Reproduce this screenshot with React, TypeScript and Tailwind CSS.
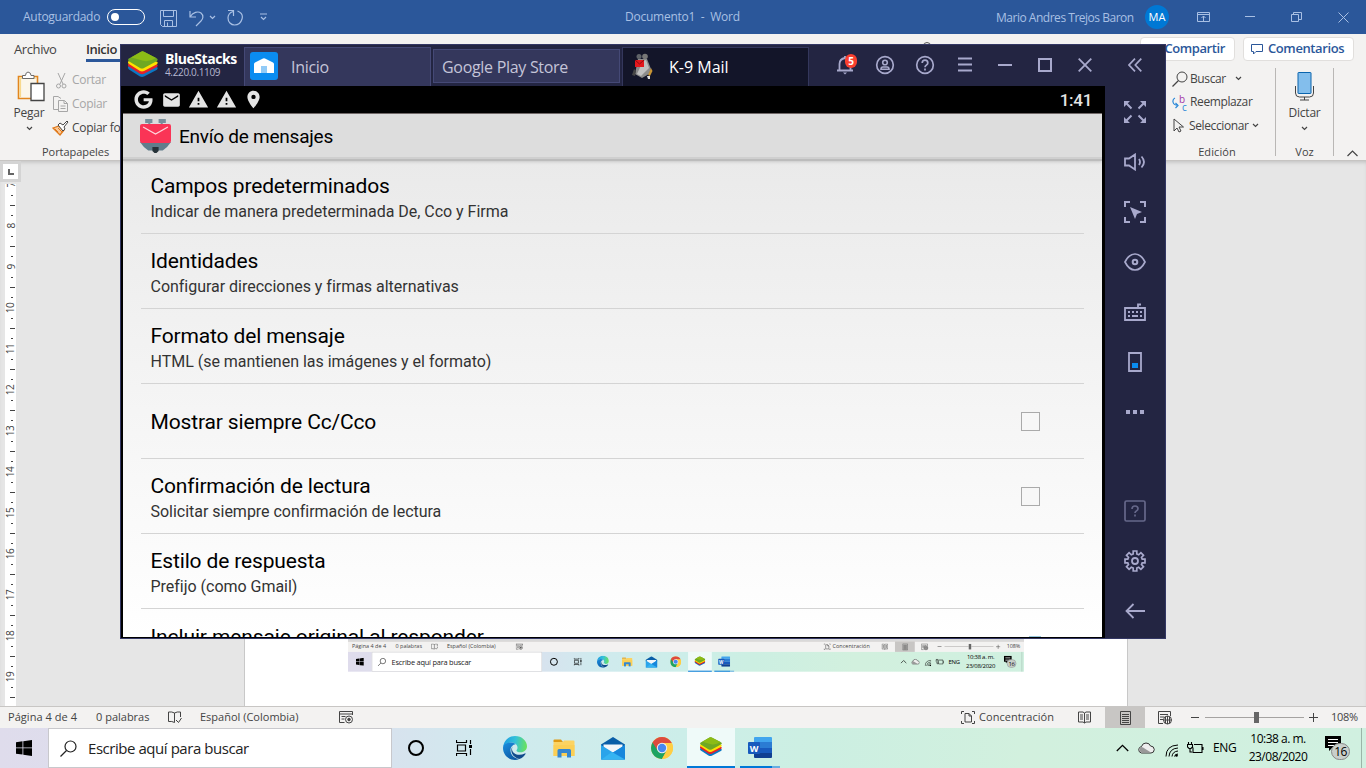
import React from "react";
import { FaGoogle } from "react-icons/fa";
import { MdEmail, MdWarning, MdLocationOn } from "react-icons/md";

type IconProps = { className?: string };

const ui = "font-['Open_Sans','Noto_Sans',sans-serif]";

function Svg({ w, h, className = "", children }: { w: number; h: number; className?: string; children: React.ReactNode }) {
  return (
    <svg width={w} height={h} viewBox={`0 0 ${w} ${h}`} fill="none" stroke="currentColor" className={`block shrink-0 ${className}`}>
      {children}
    </svg>
  );
}

function Caret({ className = "" }: IconProps) {
  return (
    <Svg w={7} h={5} className={className}>
      <path d="M1 1l2.500 2.500L6 1" strokeWidth="1.200" />
    </Svg>
  );
}

/* ---------- Logos ---------- */

function BlueStacksLogo({ size }: { size: number }) {
  return (
    <svg width={size} height={size * 0.87} viewBox="0 0 30 26" className="block shrink-0">
      <path d="M0 15.500L16 10l13.500 6.500c.4 1-.1 2-1 2.500L16 25.500q-2 .8-4 0L1 18.500Q-.3 17.300 0 15.500z" fill="#0b78c4" />
      <path d="M0 13L16 7l13.500 6.800c.4 1-.1 2-1 2.500L16 22.800q-2 .8-4 0L1 15.800Q-.3 15 0 13z" fill="#e3222b" />
      <path d="M0 10.500L16 5l13.500 6c.4 1-.1 2-1 2.500L16 20q-2 .8-4 0L1 13Q-.3 12.300 0 10.500z" fill="#ffe100" />
      <path d="M.5 7.700L13 .6q1.500-.8 3 0l13 6.800q1.400 1.300 0 2.500L16 16.900q-2 1-4 0L.8 10.200Q-.3 9 .5 7.700z" fill="#6fa822" />
      <path d="M3 6.500L13 .6q1.500-.8 3 0l12 6.300q-7 4.500-13 2.800T3 6.500z" fill="#8cbb16" />
    </svg>
  );
}

function EdgeLogo() {
  return (
    <svg width="24" height="24" viewBox="0 0 24 24" className="block">
      <defs>
        <linearGradient id="edgeTop" x1="0" y1=".4" x2="1" y2=".5">
          <stop offset="0" stopColor="#1b9de2" />
          <stop offset=".5" stopColor="#35c1d8" />
          <stop offset="1" stopColor="#6be35a" />
        </linearGradient>
        <linearGradient id="edgeLow" x1="0" y1="0" x2=".6" y2="1">
          <stop offset="0" stopColor="#1b8fe0" />
          <stop offset="1" stopColor="#0c59a4" />
        </linearGradient>
      </defs>
      <path d="M.2 11C.8 4.700 5.800 0 12 0c7 0 12 5 12 10.300 0 3.600-2.800 6-6.300 6-2.900 0-4.200-1-4.200-1.900 0-.7 1-1 1-2.900 0-2.300-2.500-4.900-6.500-4.900C4.500 6.600 1.500 8.500.2 11z" fill="url(#edgeTop)" />
      <path d="M0 12c0-3.500 4-5.400 7.700-5.400 2 0 3.900.6 5 1.700-3 .3-5.200 2.700-5.200 6 0 4.700 3.800 8.200 8.700 8.700C14.900 23.700 13.500 24 12 24 5.400 24 0 18.600 0 12z" fill="url(#edgeLow)" />
      <path d="M9.600 10.300c-3.400 5.500.4 11.200 6.600 12.700 3-1 5.100-3.100 6.300-5.100.3-.6-.2-.8-.7-.5-5.800 3-12.500.6-12.800-4.200 0-1.100.2-2 .6-2.900z" fill="#114a8b" />
    </svg>
  );
}

function FolderLogo() {
  return (
    <svg width="22" height="19" viewBox="0 0 22 19" className="block">
      <path d="M.5 1.500Q.5.500 1.500.500H8l2 2.500H.5z" fill="#e09a12" />
      <path d="M.5 3H10l1-1.500h9.500q1 0 1 1V17h-21z" fill="#fcd362" />
      <path d="M.5 6h21v11H.5z" fill="#fbcf55" />
      <path d="M4.500 18.500V11.500Q4.500 10 6 10h10.500q1.500 0 1.500 1.500v7h-4v-4.500H8.500v4.500z" fill="#3587d0" />
    </svg>
  );
}

function MailLogo() {
  return (
    <svg width="24" height="23" viewBox="0 0 24 23" className="block">
      <path d="M0 7.500L12 0l12 7.500V10H0z" fill="#0a5ea8" />
      <path d="M2.500 7.500h19V16h-19z" fill="#f3f6fa" />
      <path d="M0 8l12 7.500L24 8v14.500H0z" fill="#2aa4ea" />
      <path d="M0 22.500L14.500 14 24 8v14.500z" fill="#1787dc" />
      <path d="M0 22.500L11 15l13 7.500z" fill="#35b4f2" />
    </svg>
  );
}

function ChromeLogo() {
  return (
    <svg width="22" height="22" viewBox="0 0 22 22" className="block">
      <circle cx="11" cy="11" r="11" fill="#ffce44" />
      <path d="M1.500 5.500A11 11 0 0 0 11 22l4.700-8.300L11 11z" fill="#1da362" />
      <path d="M11 6h9.800q-.1-.3-.3-.5A11 11 0 0 0 1.500 5.500L6.700 13.500z" fill="#dd4b3e" />
      <path d="M11 22l4.600-8.500L20.800 6A11 11 0 0 1 11 22z" fill="#ffce44" />
      <circle cx="11" cy="11" r="5.200" fill="#f1f1f1" />
      <circle cx="11" cy="11" r="4.200" fill="#4688f1" />
    </svg>
  );
}

function WordLogo() {
  return (
    <div className="relative h-[21px] w-6">
      <div className="ml-[6px] flex h-[21px] flex-col overflow-hidden rounded-[1px]">
        <div className="h-[5px] bg-[#41a5ee]" />
        <div className="h-[6px] bg-[#2b7cd3]" />
        <div className="h-[5px] bg-[#185abd]" />
        <div className="h-[5px] bg-[#103f91]" />
      </div>
      <div className="absolute left-0 top-[5px] flex size-3 items-center justify-center rounded-[1px] bg-[#185abd] text-[9px] font-bold leading-none text-white">W</div>
    </div>
  );
}

/* ---------- Word ---------- */

function TitleBar() {
  return (
    <header className="flex h-[34px] shrink-0 items-center bg-[#2b579a] text-[12px] text-[#a9c0e4]">
      <div className="w-[84px] pl-[23px] text-[12px] leading-4 tracking-[-0.28px]">Autoguardado</div>
      <div className="ml-[23px] flex h-4 w-[38px] items-center rounded-full border border-white pl-[3px]">
        <div className="size-2 rounded-full bg-white" />
      </div>
      <Svg w={17} h={17} className="ml-[15px] mt-[2px]">
        <path d="M.5.500h16v16h-14l-2-2zM3.500.500v6h10v-6M4.500 16v-5.500h8V16M7.500 12.500v3.500" />
      </Svg>
      <Svg w={16} h={17} className="ml-3 mt-[2px]">
        <path d="M1 1v6h6M1 7c3-5 8-6 11-4 3 2.500 2 6 0 8l-5 5" strokeWidth="1.200" />
      </Svg>
      <Caret className="ml-1" />
      <Svg w={18} h={18} className="ml-[10px] mt-[2px]">
        <path d="M2 1.500h5.500V7M11.500 2c4 1.500 5.500 4.500 4.500 8s-4 6-7.500 6-6.500-3-6.500-7c0-3 2-5.500 5-6.500" strokeWidth="1.200" />
      </Svg>
      <Svg w={9} h={8} className="ml-[15px]">
        <path d="M1 1h7M2 4l2.500 2.500L7 4" strokeWidth="1.200" />
      </Svg>
      <div className="ml-[357px] w-[116px] whitespace-pre text-[12px] leading-[18px] tracking-[-0.25px]">Documento1  -  Word</div>
      <div className="ml-auto w-[137px] whitespace-nowrap pt-px text-[12px] tracking-[-0.48px]">Mario Andres Trejos Baron</div>
      <div className="ml-[12px] flex size-6 items-center justify-center rounded-full bg-[#0078d4] text-[11px] text-white">MA</div>
      <Svg w={13} h={10} className="ml-7">
        <path d="M.5.500h12v9H.500zM.5 2.500h12M6.500 9V4M4.500 6l2-2 2 2" />
      </Svg>
      <Svg w={10} h={10} className="ml-[35px]"><path d="M0 4.500h10" /></Svg>
      <Svg w={11} h={10} className="ml-9"><path d="M.5 2.500h7v7h-7zM2.500 2V.500h8v7H8" /></Svg>
      <Svg w={11} h={11} className="ml-[36px] mr-[17px]"><path d="M.5.500l10 10M10.500.500l-10 10" /></Svg>
    </header>
  );
}

function PasteIcon() {
  return (
    <svg width="28" height="31" viewBox="0 0 28 31" fill="none" className="block">
      <path d="M1.500 5.500h19v22h-19z" fill="#fbf6ea" stroke="#e2861e" strokeWidth="1.600" />
      <path d="M3.300 26V7.300h15.400" stroke="#f8d98c" strokeWidth="1.600" />
      <path d="M5.500 7.500v-3h3q0-3 2.500-3.500 3 .5 3 3.500h3v3z" fill="#fff" stroke="#6b6b6b" />
      <path d="M14 12.500h13v17H14z" fill="#fff" stroke="#444" strokeWidth="1.300" />
    </svg>
  );
}

function Ribbon() {
  return (
    <section className="flex h-[126px] shrink-0 justify-between bg-[#f3f2f1] text-[#444]">
      <div className="w-[180px]">
        <div className="flex h-[30px] text-[14px] leading-[30px]">
          <div className="w-[86px] pl-[14px] text-[13px] tracking-[-0.4px]">Archivo</div>
          <div className="h-[28px] w-[34px] border-b-[3px] border-[#2b579a] text-[13px] font-semibold tracking-[-0.5px] text-[#333]">Inicio</div>
        </div>
        <div className="flex h-[80px]">
          <div className="flex w-[52px] flex-col items-center pl-[6px] pt-[7px]">
            <div className="ml-[4px]"><PasteIcon /></div>
            <div className="mt-[3px] text-[12px] leading-4 tracking-[-0.2px]">Pegar</div>
            <Caret className="mt-[5px]" />
          </div>
          <div className="pt-1 text-[12px] tracking-[-0.3px]">
            <div className="flex h-6 items-center text-[#a6a6a6]">
              <Svg w={16} h={17} className="ml-[2px] mr-[2px]">
                <path d="M4 1l5 11M11 1L6 12" />
                <circle cx="4.500" cy="14" r="2" /><circle cx="10" cy="14" r="2" />
              </Svg>
              Cortar
            </div>
            <div className="flex h-6 items-center text-[#a6a6a6]">
              <Svg w={17} h={16} className="mr-[3px]">
                <path d="M6 13.500H1.500v-13H6l3 2M6.500 4.500h6l3 3v8h-9zM12 4.500v3h3.500M8.500 10h5M8.500 12.500h5" />
              </Svg>
              Copiar
            </div>
            <div className="flex h-6 items-center whitespace-nowrap">
              <svg width="17" height="16" viewBox="0 0 17 16" fill="none" className="mr-[3px] block">
                <path d="M1 8l6-2 5 4-4 5z" fill="#f9c99a" stroke="#e07a1c" strokeWidth="1.300" />
                <path d="M3 9l3 3M6 8l4 4" stroke="#e07a1c" />
                <path d="M6 5l2-2 3 2 4-4 1 1-4 5 1 2-2 2z" fill="#fff" stroke="#444" />
              </svg>
              Copiar formato
            </div>
          </div>
        </div>
        <div className="pl-[42px] text-[11px] leading-4 tracking-[-0.05px]">Portapapeles</div>
      </div>

      <div className="relative h-2 w-2 self-start">
        <div className="absolute left-[267px] top-[8px] h-2 w-2 rounded-full border border-[#555]" />
      </div>

      <div className="w-[226px]">
        <div className="flex h-[30px] gap-2 pt-[3px] text-[13px] font-semibold text-[#2b579a]">
          <div className="flex h-6 w-[95px] items-center justify-end rounded-sm border border-[#e1dfdd] bg-white pr-[9px] tracking-[-0.4px]">Compartir</div>
          <div className="flex h-6 w-[111px] items-center rounded-sm border border-[#e1dfdd] bg-white pl-[7px] tracking-[-0.4px]">
            <Svg w={12} h={11} className="mr-[5px]"><path d="M.5.500h11v7H5l-2.500 2.500V7.500h-2z" /></Svg>
            Comentarios
          </div>
        </div>
        <div className="flex h-[96px] pl-[26px] text-[12px]">
          <div className="w-[109px] pl-[6px] tracking-[-0.38px]">
            <div className="flex h-[23px] items-center pt-[6px]">
              <Svg w={16} h={16} className="mr-[2px]"><circle cx="10" cy="6" r="5" /><path d="M6.500 9.500L.500 15.500" strokeWidth="1.300" /></Svg>
              Buscar
              <Caret className="ml-[9px]" />
            </div>
            <div className="flex h-[23px] items-center pt-[7px]">
              <div className="mr-[3px] flex h-[17px] w-[15px] text-[10px] leading-[10px]">
                <Svg w={7} h={15} className="mt-[2px] text-[#2b88d8]"><path d="M3 2Q.500 3 1 6t5 3.500M3.500 7L6 9.500 3.500 12" strokeWidth="1.200" /></Svg>
                <div className="flex w-2 flex-col"><span className="text-[#a338a8]">b</span><span className="-mt-[2px] pl-[3px] text-[#2b88d8]">c</span></div>
              </div>
              Reemplazar
            </div>
            <div className="flex h-[25px] items-center pt-[6px]">
              <Svg w={14} h={15} className="ml-[1px] mr-[2px]"><path d="M1 1v12l3-3 2 4 2-1-2-4h4.500z" /></Svg>
              Seleccionar
              <Caret className="ml-[3px]" />
            </div>
            <div className="mt-[9px] w-[90px] text-center text-[11px] leading-4 tracking-[0.1px]">Edición</div>
          </div>
          <div className="mt-1 h-[88px] w-px bg-[#b9b7b5]" />
          <div className="flex w-[57px] flex-col items-center pt-[8px] leading-4">
            <Svg w={20} h={29}>
              <path d="M3.500.500h12q.5 0 .500.500v20q0 .500-.500.500h-12q-.5 0-.500-.500V1q0-.500.500-.500z" fill="#83beec" stroke="#0a64ad" />
              <path d="M.5 14v7q0 4 4 4h10q4 0 4-4v-7M9.500 25v3M5 28h9" stroke="#444" />
            </Svg>
            <div className="mt-[4px] tracking-[-0.2px]">Dictar</div>
            <Caret className="mt-[5px]" />
            <div className="mt-[13px] text-[11px]">Voz</div>
          </div>
          <div className="mt-1 h-[88px] w-px bg-[#b9b7b5]" />
          <Svg w={11} h={7} className="ml-[13px] mt-[86px]"><path d="M.5 6L5.500 1l5 5" strokeWidth="1.200" /></Svg>
        </div>
      </div>
    </section>
  );
}

function Ruler() {
  const marks = [7, 8, 9, 10, 11, 12, 13, 14, 15, 16, 17, 18, 19];
  return (
    <div className="ml-[5px] mt-[2px] h-[522px] w-[11px] overflow-hidden bg-white text-[#444]">
      <div className="-mt-[4px]">
        {marks.map((n) => (
          <div key={n} className="grid h-[41px] grid-rows-[10px_10px_10px_11px] place-items-center">
            <div className="-rotate-90 text-[10px] leading-[10px] tracking-[-0.5px]">{n}</div>
            <div className="ml-[2px] h-px w-[2px] bg-[#444]" />
            <div className="ml-[3px] h-px w-[5px] bg-[#444]" />
            <div className="ml-[2px] h-px w-[2px] bg-[#444]" />
          </div>
        ))}
      </div>
    </div>
  );
}

function StatusBar() {
  return (
    <footer className="flex h-[22px] shrink-0 items-center border-t border-[#c8c6c4] bg-[#f3f2f1] text-[11px] text-[#444]">
      <div className="w-[96px] whitespace-nowrap pl-2 tracking-[0.05px]">Página 4 de 4</div>
      <div className="w-[72px] whitespace-nowrap">0 palabras</div>
      <Svg w={14} h={13}><path d="M6.500 2v9.500M6.500 2Q4 .500.500 1v9.500q3.500-.500 6 1M6.500 2Q9 .500 12.500 1v5M8 9l2.500 2.500L13.500 7" /></Svg>
      <div className="ml-[18px] w-[139px] whitespace-nowrap">Español (Colombia)</div>
      <Svg w={15} h={13}><path d="M13.500 4V.500H.500v11h5M.500 3h13M2.500 5.500h4M2.500 8h3" /><circle cx="10" cy="8.500" r="3.500" /><circle cx="10" cy="8.500" r="1.300" fill="currentColor" /></Svg>
      <div className="flex-1" />
      <Svg w={14} h={13} className="mr-px"><path d="M.5 3V.500H3M11 .500h2.500V3M.500 10v2.500H3M11 12.500h2.500V10M4 2.500h4l2.500 2.500v6H4zM8 2.500V5h2.500" /></Svg>
      <div className="ml-[3px] w-[99px] whitespace-nowrap tracking-[0.05px]">Concentración</div>
      <Svg w={13} h={13}><path d="M6.500 2v10M.500 1H5l1.500 1L8 1h4.500v10H8l-1.500 1L5 11H.500zM2 4h3M2 6h3M2 8h3M8 4h3M8 6h3M8 8h3" /></Svg>
      <div className="ml-[14px] flex h-[21px] w-10 items-center justify-center bg-[#c8c6c4]">
        <Svg w={11} h={14}><path d="M.5.500h10v13H.500zM2 3.500h7M2 5.500h7M2 7.500h7M2 9.500h7M2 11.500h7" /></Svg>
      </div>
      <Svg w={15} h={14} className="ml-[13px]"><path d="M12.500 5V.500H.500v12H5M2 3.500h8M2 6h4M2 8.500h3" /><circle cx="9.500" cy="9" r="4" /><path d="M5.500 9h8M9.500 5v8M7.500 6v6M11.500 6v6" /></Svg>
      <div className="ml-[18px] h-px w-2 bg-[#444]" />
      <div className="ml-[6px] flex h-[11px] w-[99px] items-center">
        <div className="h-px w-[49px] bg-[#a5a3a1]" />
        <div className="h-[11px] w-[5px] bg-[#666]" />
        <div className="h-px flex-1 bg-[#a5a3a1]" />
      </div>
      <Svg w={9} h={9} className="ml-[5px]"><path d="M0 4.500h9M4.500 0v9" /></Svg>
      <div className="ml-[13px] w-[35px] tracking-[-0.3px]">108%</div>
    </footer>
  );
}

function Taskbar() {
  return (
    <nav className="flex h-10 shrink-0 items-stretch bg-[linear-gradient(90deg,#dfdcec_0%,#d8e2ee_28%,#d0eaee_36%,#cceee9_50%,#ccefe2_60%,#d2f0de_75%,#d0f0e0_100%)] text-black">
      <div className="flex w-12 items-center justify-center">
        <svg width="16" height="16" viewBox="0 0 16 16" className="block">
          <path d="M0 2.200L6.500 1.300v6.200H0zM7.300 1.200L16 0v7.500H7.300zM0 8.300h6.500v6.300L0 13.700zM7.300 8.300H16V16l-8.700-1.200z" fill="#000" />
        </svg>
      </div>
      <div className="flex w-[344px] items-center border border-[#c8c8cc] bg-white pl-[11px] text-[15px] text-[#222]">
        <Svg w={17} h={17}><circle cx="10.500" cy="6.500" r="5.500" strokeWidth="1.200" /><path d="M6.500 10.500l-6 6" strokeWidth="1.200" /></Svg>
        <span className="ml-[11px] whitespace-nowrap tracking-[-0.45px]">Escribe aquí para buscar</span>
      </div>
      <div className="flex w-12 items-center justify-center">
        <div className="size-[16px] rounded-full border-2 border-black" />
      </div>
      <div className="flex w-12 items-center justify-center">
        <Svg w={17} h={16}><path d="M.5 0v2.500h10V0M.500 16v-2.500h10V16M1.500 5h8v6h-8zM14.500 0v4M14.500 9v6" strokeWidth="1.200" /><path d="M13 5h3v3h-3z" fill="currentColor" stroke="none" /></Svg>
      </div>
      <div className="flex w-[53px] items-center justify-center"><EdgeLogo /></div>
      <div className="flex w-[45px] items-center justify-center"><FolderLogo /></div>
      <div className="flex w-[53px] items-center justify-center"><MailLogo /></div>
      <div className="flex w-[45px] items-center justify-center pl-px"><ChromeLogo /></div>
      <div className="ml-[3px] flex w-12 items-center justify-center border-b-2 border-[#0078d7] bg-[#effaf9]"><BlueStacksLogo size={22} /></div>
      <div className="ml-[5px] flex w-10 flex-col items-center">
        <div className="flex h-[38px] items-center pt-px"><WordLogo /></div>
        <div className="flex h-[2px] w-10"><div className="w-8 bg-[#0078d7]" /><div className="w-2 bg-[#66aee2]" /></div>
      </div>
      <div className="flex-1" />
      <div className="flex items-center">
        <Svg w={13} h={8}><path d="M.8 7l5.700-5.700L12.200 7" strokeWidth="1.300" /></Svg>
        <Svg w={17} h={12} className="ml-[9px]">
          <path d="M3.500 11Q.700 10.500.700 7.500 1 5 3.500 4.500 4.500 1 8 1q3.500 0 4.500 3 3.500 0 3.800 3.500Q16 11 13 11z" fill="#eee" stroke="#333" />
          <path d="M1.500 6Q3 4.500 5 5.500L13 10.500H3.500Q.800 9.500 1.500 6z" fill="#999" stroke="none" />
        </Svg>
        <Svg w={14} h={13} className="ml-[10px] mt-1"><path d="M1 12.500Q1 1.500 13 1M4 12.500Q4.500 4.500 13 4M7 12.500Q7.500 7.500 13 7" /><path d="M9.500 12.500Q10 10 13 10" /><circle cx="11.500" cy="11.500" r="1.300" fill="currentColor" stroke="none" /></Svg>
        <Svg w={17} h={12} className="ml-[8px]"><path d="M1.500 0v2.500M4.500 0v2.500M.500 2.500h5V5L4 6.500H2L.500 5zM3 6.500V10h2M7 2.500h8v8H6V5.500M16 5v3" strokeWidth="1.100" /></Svg>
        <div className="ml-[9px] w-[25px] text-[12px] tracking-[-0.4px]">ENG</div>
        <div className="ml-[8px] w-[64px] whitespace-nowrap text-center text-[12px] leading-[18px] tracking-[-0.5px]">
          <div>10:38 a. m.</div>
          <div>23/08/2020</div>
        </div>
        <div className="relative ml-[15px] mr-[12px] size-6">
          <svg width="16" height="15" viewBox="0 0 16 15" className="block">
            <path d="M0 0h16v12H7l-3 3v-3H0z" fill="#000" />
            <path d="M3 3.500h10M3 6.500h10M3 9.500h6" stroke="#fff" />
          </svg>
          <div className="absolute left-[6px] top-[7px] flex h-[17px] w-[19px] items-center justify-center rounded-full border border-[#888] bg-[#c9cfcb] text-[12px] leading-none tracking-[-0.6px]">16</div>
        </div>
        <div className="w-[5px] self-stretch border-l border-[#9bb5a8]" />
      </div>
    </nav>
  );
}

function DocumentArea() {
  return (
    <main className="flex h-[546px] shrink-0 bg-[#e6e6e6] shadow-[inset_0_1px_0_#c6c4c2,inset_0_4px_4px_-2px_#bbb]">
      <div className="w-[244px]">
        <div className="mt-px flex size-[21px] items-center justify-center bg-[#d4d4d4]">
          <div className="flex size-[15px] items-center justify-center bg-white">
            <div className="mt-px size-[6px] border-b-2 border-l-2 border-[#666]" />
          </div>
        </div>
        <Ruler />
      </div>
      <div className="flex w-[884px] flex-col border-x border-[#c8c8c8] bg-white pl-[103px] pt-[479px]">
        <div className="h-[33px] w-[676px] overflow-hidden">
          <div className="h-[2px] bg-[#d9d9d9]" />
          <div className="w-[1366px] origin-top-left scale-[0.495]">
            <StatusBar />
            <Taskbar />
          </div>
        </div>
      </div>
    </main>
  );
}

/* ---------- BlueStacks ---------- */

function K9TabIcon() {
  return (
    <svg width="22" height="27" viewBox="0 0 22 27" className="block">
      <path d="M7 6l9 0 4 10-2 5-7 4-7-4z" fill="#8c8c8c" />
      <path d="M12 8l3-1 3 8-8 8-4-2z" fill="#c0c0c0" />
      <circle cx="8" cy="3.500" r="2.500" fill="#5f6368" /><circle cx="14" cy="3.500" r="2.800" fill="#777" />
      <path d="M4 7h9v7H4z" fill="#e3171d" /><path d="M4 7l4.500 4L13 7" stroke="#8f0d10" fill="none" />
      <path d="M3 16l-2 6 3 1 1-5z" fill="#444" />
      <path d="M17 22l3-7 1.500 3-2.500 5z" fill="#c79434" /><path d="M16 23h3v3h-2z" fill="#ddd" />
    </svg>
  );
}

function HeaderCell({ children }: { children: React.ReactNode }) {
  return <div className="flex w-10 items-center justify-center pb-[2px]">{children}</div>;
}

function EmulatorHeader() {
  return (
    <div className="flex h-[41px] shrink-0 text-[#a8a9cc]">
      <div className="flex w-[123px] items-start pl-[7px] pt-[6px]">
        <BlueStacksLogo size={30} />
        <div className="ml-[7px] w-[76px] whitespace-nowrap">
          <div className="text-[14px] font-bold leading-[15px] tracking-[-0.45px] text-white">BlueStacks</div>
          <div className="text-[10px] leading-[13px] tracking-[-0.35px] text-[#b6b7d0]">4.220.0.1109</div>
        </div>
      </div>
      <div className="mt-[2px] flex w-[187px] items-center border border-b-0 border-[#454976] bg-[#34375c] pb-[2px] pl-[5px]">
        <div className="flex size-7 items-center justify-center rounded-[3px] bg-[#0a8cf0]">
          <svg width="20" height="16" viewBox="0 0 20 16" className="block"><path d="M0 6Q0 5 1 4.500L9 .500q1-.500 2 0l8 4q1 .500 1 1.500v9H0z" fill="#fff" /><path d="M7 8h6v7H7z" fill="#92cbf7" /></svg>
        </div>
        <span className="ml-[13px] pt-[2px] text-[16px] leading-5 tracking-[-0.3px] text-[#c4c4d8]">Inicio</span>
      </div>
      <div className="ml-[2px] mt-1 flex h-[34px] w-[187px] items-center whitespace-nowrap border border-[#454976] bg-[#34375c] pl-[8px] pt-[2px] text-[16px] tracking-[-0.3px] text-[#c4c4d8]">Google Play Store</div>
      <div className="ml-[2px] mt-[2px] flex w-[187px] items-center border border-b-0 border-[#34375c] bg-[#131529] pb-[2px] pl-[8px]">
        <K9TabIcon />
        <span className="ml-[16px] pt-[2px] text-[16px] leading-5 tracking-[0px] text-white">K-9 Mail</span>
      </div>
      <div className="ml-[16px] flex">
        <HeaderCell>
          <div className="relative">
            <Svg w={18} h={20}><path d="M1 15.500h16M3.500 15V9q0-5 5.500-6 5.500 1 5.500 6v6M9 1v2" strokeWidth="1.800" /><path d="M7 17.500h4l-2 2z" fill="currentColor" stroke="none" /></Svg>
            <div className="absolute left-[9px] top-[-1px] flex h-[14px] w-3 items-center justify-center rounded-full bg-[#f9402f] text-[10px] font-bold leading-none text-white">5</div>
          </div>
        </HeaderCell>
        <HeaderCell><Svg w={20} h={20}><circle cx="10" cy="10" r="8.300" strokeWidth="1.700" /><circle cx="10" cy="7.500" r="2.300" strokeWidth="1.600" /><path d="M6 14.200q0-2.200 2-2.200h4q2 0 2 2.200z" strokeWidth="1.600" /></Svg></HeaderCell>
        <HeaderCell><Svg w={20} h={20}><circle cx="10" cy="10" r="8.300" strokeWidth="1.700" /><path d="M7.200 8q0-2.800 2.800-2.800T12.800 8c0 2-2.800 2.200-2.800 4.200M10 13.500v2" strokeWidth="1.700" /></Svg></HeaderCell>
        <HeaderCell><Svg w={14} h={15}><path d="M0 1.500h14M0 7.500h14M0 13.500h14" strokeWidth="2" /></Svg></HeaderCell>
        <HeaderCell><Svg w={14} h={4}><path d="M0 2h14" strokeWidth="2" /></Svg></HeaderCell>
        <HeaderCell><Svg w={14} h={14}><path d="M1 1h12v12H1z" strokeWidth="2" /></Svg></HeaderCell>
        <HeaderCell><Svg w={14} h={14}><path d="M.7.700l12.600 12.600M13.300.700L.700 13.300" strokeWidth="1.800" /></Svg></HeaderCell>
      </div>
    </div>
  );
}

const settings: { title: string; detail?: string; check?: boolean }[] = [
  { title: "Campos predeterminados", detail: "Indicar de manera predeterminada De, Cco y Firma" },
  { title: "Identidades", detail: "Configurar direcciones y firmas alternativas" },
  { title: "Formato del mensaje", detail: "HTML (se mantienen las imágenes y el formato)" },
  { title: "Mostrar siempre Cc/Cco", check: true },
  { title: "Confirmación de lectura", detail: "Solicitar siempre confirmación de lectura", check: true },
  { title: "Estilo de respuesta", detail: "Prefijo (como Gmail)" },
];

function AndroidScreen() {
  return (
    <div className="flex flex-1 flex-col overflow-hidden border-b border-l-2 border-r-[3px] border-black bg-black font-['Roboto',sans-serif]">
      <div className="flex h-[27px] shrink-0 items-center pl-[11px] text-[#e4e4e4]">
        <FaGoogle className="size-[19px]" />
        <MdEmail className="ml-[7px] h-[20px] w-[23px]" />
        <MdWarning className="ml-[5px] size-[21px]" />
        <MdWarning className="ml-[7px] size-[21px]" />
        <MdLocationOn className="ml-[6px] size-[21px]" />
        <span className="ml-auto mr-[10px] pt-[2px] text-[17px] font-medium tracking-[-0.3px]">1:41</span>
      </div>
      <div className="relative flex h-[46px] shrink-0 items-center border-b-2 border-t border-b-[#cfcfcf] border-t-[#706868] bg-[#ddd] pl-[17px] text-black shadow-[0_2px_0_#bcbcbc,0_3px_3px_rgba(0,0,0,0.15)]">
        <svg width="31" height="34" viewBox="0 0 30 34" preserveAspectRatio="none" className="block">
          <path d="M5 0h7v4h-2v4H8V4H5zM18 0h7v4h-3v4h-2V4h-2z" fill="#78909c" />
          <path d="M0 23h30q-3 5-8 8.500H8Q3 28 0 23z" fill="#607d8b" />
          <path d="M2 5h26q2 0 2 2v15q0 2-2 2H2q-2 0-2-2V7q0-2 2-2z" fill="#fa3456" />
          <path d="M3 8l12 7 12-7" fill="none" stroke="#ffd5dc" strokeWidth="1.200" />
          <path d="M12 28h6v4l-2 2h-2l-2-2z" fill="#263238" />
        </svg>
        <h1 className="ml-[8px] pt-[3px] text-[19px] leading-6 tracking-[-0.24px]">Envío de mensajes</h1>
      </div>
      <div className="flex-1 overflow-hidden bg-linear-to-b from-[#eaeaea] to-white px-[18px] text-black">
        {settings.map((s) => (
          <div key={s.title} className="flex h-[75px] items-center justify-between border-b border-[#d4d4d4] pl-[9.5px] pr-[44px]">
            <div className={s.detail ? "pt-[6px]" : "pt-[3px]"}>
              <div className="text-[21px] leading-[25px] tracking-[-0.15px]">{s.title}</div>
              {s.detail && <div className="text-[16px] leading-[25px] tracking-[-0.02px] text-[#333]">{s.detail}</div>}
            </div>
            {s.check && <div className="size-[19px] border-[1.5px] border-[#aaa] bg-[#f7f7f7]" />}
          </div>
        ))}
        <div className="flex justify-between pl-[9.5px] pr-[43px] pt-[15px]">
          <div className="text-[21px] leading-[26px] tracking-[-0.12px]">Incluir mensaje original al responder</div>
          <div className="mt-[12px] h-[19px] w-[12px] border-t border-[#99c8dd]" />
        </div>
      </div>
    </div>
  );
}

function SideCell({ children }: { children: React.ReactNode }) {
  return <div className="flex h-[50px] shrink-0 items-center justify-center">{children}</div>;
}

function Sidebar() {
  return (
    <aside className="flex w-[60px] shrink-0 flex-col text-[#a8a9cc]">
      <div className="flex h-[42px] shrink-0 items-center justify-center pb-[3px]"><Svg w={14} h={14}><path d="M7 .700L1 7l6 6.300M13.300.700L7.300 7l6 6.300" strokeWidth="1.700" /></Svg></div>
      <SideCell>
        <Svg w={22} h={22}>
          <path d="M0 6V0h6zM22 6V0h-6zM0 16v6h6zM22 16v6h-6z" fill="currentColor" stroke="none" />
          <path d="M2 2l5.500 5.500M20 2l-5.500 5.500M2 20l5.500-5.500M20 20l-5.500-5.500" strokeWidth="2" />
        </Svg>
      </SideCell>
      <SideCell><Svg w={22} h={18}><path d="M1 5.500h4l6-4v15l-6-4H1zM15 6q2 3 0 6M17.500 3.500q5 5.500 0 11" strokeWidth="1.800" /></Svg></SideCell>
      <SideCell><Svg w={22} h={22}><path d="M1 6V1h5M16 1h5v5M1 16v5h5M16 21h5v-5" strokeWidth="2" /><path d="M6 6l12 5-5 2-2 5z" fill="currentColor" stroke="none" /></Svg></SideCell>
      <SideCell><Svg w={22} h={18}><path d="M1 9q4-8 10-8t10 8q-4 8-10 8T1 9z" strokeWidth="1.700" /><circle cx="11" cy="9" r="2.300" strokeWidth="2" /></Svg></SideCell>
      <SideCell><Svg w={22} h={18}><path d="M1 5h20v12H1zM14 5V1.500h3" strokeWidth="1.800" /><path d="M4 9h14" strokeWidth="2" strokeDasharray="2 2" /><path d="M4 13h2M8 13h6M16 13h2" strokeWidth="2" /></Svg></SideCell>
      <SideCell><Svg w={14} h={20}><path d="M1 1h12v18H1z" strokeWidth="1.800" /><path d="M4 11h6v5H4z" fill="#0a8cf0" stroke="none" /></Svg></SideCell>
      <SideCell><div className="flex gap-[3px]"><i className="size-1 bg-current" /><i className="size-1 bg-current" /><i className="size-1 bg-current" /></div></SideCell>
      <div className="h-[49px] shrink-0" />
      <SideCell><Svg w={22} h={22} className="text-[#66688a]"><rect x="1" y="1" width="20" height="20" rx="1.500" strokeWidth="1.700" /><path d="M8 9q0-3 3-3t3 2.700c0 2.300-3 2-3 4.300M11 14.500v2" strokeWidth="1.700" /></Svg></SideCell>
      <SideCell>
        <Svg w={22} h={22}><path d="M9.200 1h3.600v3l1.900.800 2.200-2.100 2.600 2.600-2 2.200.7 1.700H21v3.600h-2.800l-.7 1.800 2 2.100-2.600 2.600-2.200-2-1.900.700v3H9.200v-3l-1.900-.7-2.200 2-2.600-2.600 2-2.100-.700-1.800H1V9.200h2.800l.7-1.700-2-2.200 2.600-2.600 2.200 2.100L9.200 4z" strokeWidth="1.700" /><circle cx="11" cy="11" r="3" strokeWidth="1.800" /></Svg>
      </SideCell>
      <SideCell><Svg w={20} h={16}><path d="M20 8H2M8.500 1L1.500 8l7 7" strokeWidth="1.800" /></Svg></SideCell>
    </aside>
  );
}

export default function App() {
  return (
    <div className={`relative flex h-[768px] w-[1366px] flex-col overflow-hidden ${ui}`}>
      <TitleBar />
      <Ribbon />
      <DocumentArea />
      <StatusBar />
      <Taskbar />
      <div className="absolute left-[120px] top-[44px] flex h-[595px] w-[1046px] overflow-hidden border border-[#333764] bg-[#232542]">
        <div className="flex w-[984px] shrink-0 flex-col">
          <EmulatorHeader />
          <AndroidScreen />
        </div>
        <Sidebar />
      </div>
    </div>
  );
}
